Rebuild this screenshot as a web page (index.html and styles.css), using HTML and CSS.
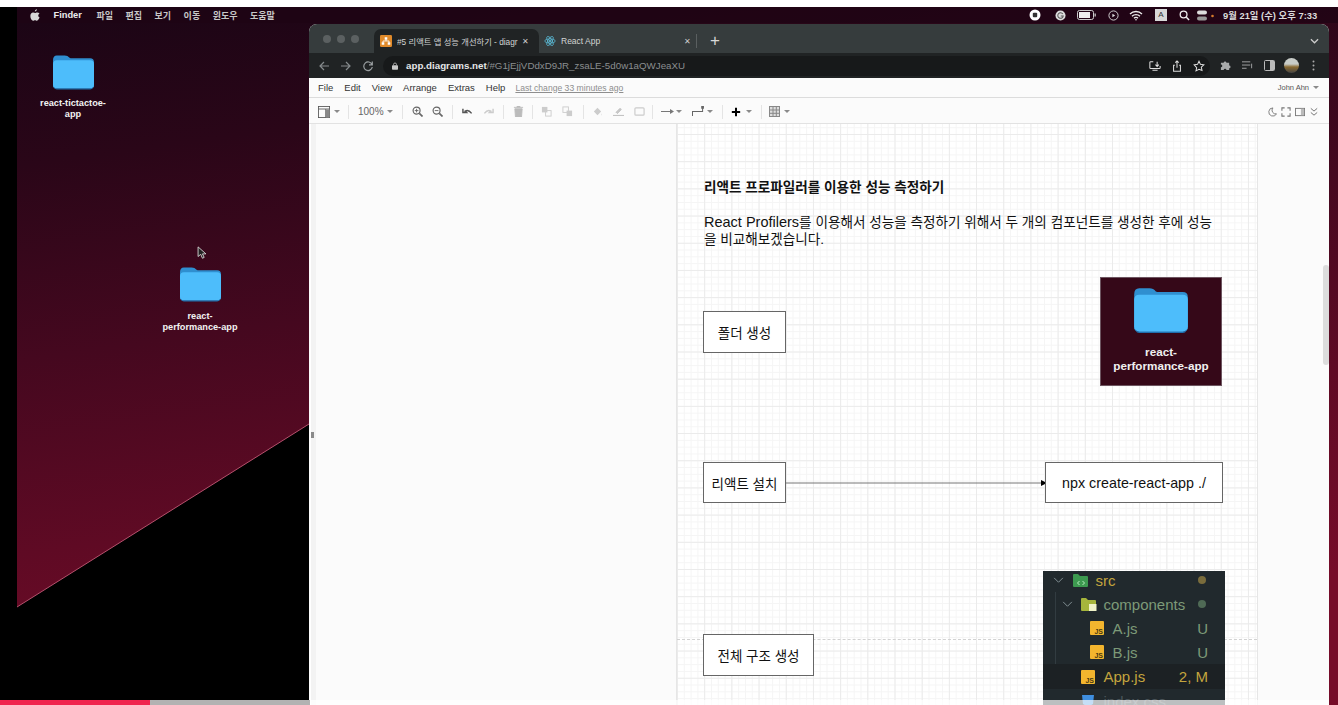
FILE: index.html
```html
<!DOCTYPE html>
<html lang="ko">
<head>
<meta charset="utf-8">
<title>Screen recording</title>
<link rel="stylesheet" href="styles.css">
</head>
<body>
<svg class="defs" width="0" height="0">
  <defs>
    <symbol id="folder" viewBox="0 0 42 36">
      <path d="M0 6q0-5 4-5h8q3 0 5 2.500l1 .5h20q4 0 4 4v23q0 4-4 4H4q-4 0-4-4z" fill="#2f8fd0"/>
      <path d="M0 10q0-4 4-4h34q4 0 4 4v21q0 4-4 4H4q-4 0-4-4z" fill="#4dbdfb"/>
      <path d="M1 33q1 2 3 2h34q2 0 3-2v1q-1 2-3 2H4q-2 0-3-2z" fill="#1f6fae"/>
    </symbol>
    <symbol id="jsfile" viewBox="0 0 14 14">
      <rect width="14" height="14" rx="1" fill="#f3b52e"/>
      <text x="13" y="12.500" text-anchor="end" class="js-mark">JS</text>
    </symbol>
  </defs>
</svg>
<div class="top-strip"></div>
<main class="screen">
  <div class="left-pillar"></div>
  <section class="desktop">
    <svg class="wall-wedge" viewBox="0 0 1321 698" width="1321" height="698">
      <polygon points="0,600 292,417 292,698 0,698" fill="#000"/>
      <line x1="0" y1="600" x2="292" y2="417" stroke="#b5506c" stroke-width="1"/>
    </svg>

    <header class="menubar">
      <div class="menu-left">
        <svg class="apple" viewBox="0 0 12 14"><path d="M8.300 0c.1 1.200-1 2.700-2.500 2.700C5.700 1.400 6.900.1 8.300 0zM11.500 10c-.7 1.700-1.800 3.800-3.200 3.800-.9 0-1.200-.6-2.300-.6s-1.400.6-2.300.6C2 13.800.4 10.800.4 8.200c0-2.500 1.500-4.200 3.300-4.200 1 0 1.700.6 2.400.6.700 0 1.400-.7 2.600-.7 1 0 2 .5 2.700 1.400-2.200 1.300-1.900 4 .1 4.700z"/></svg>
        <b class="menu-app">Finder</b>
        <span>파일</span><span>편집</span><span>보기</span><span>이동</span><span>윈도우</span><span>도움말</span>
      </div>
      <div class="menu-right">
        <svg class="st st-rec" viewBox="0 0 12 12"><circle cx="6" cy="6" r="5.500" fill="#fff"/><rect x="3.800" y="3.800" width="4.400" height="4.400" rx="1" fill="#333"/></svg>
        <svg class="st st-g" viewBox="0 0 12 12"><circle cx="6" cy="6" r="5.500" fill="#ddd"/><path d="M8.500 4.300A3 3 0 1 0 9 6.500H6.300" fill="none" stroke="#555" stroke-width="1.100"/></svg>
        <svg class="st st-bat" viewBox="0 0 19 10"><rect x=".5" y=".5" width="16" height="9" rx="2" fill="none" stroke="#ccc"/><rect x="2" y="2" width="11" height="6" fill="#eee"/><rect x="17.500" y="3.500" width="1.300" height="3" fill="#ccc"/></svg>
        <svg class="st st-play" viewBox="0 0 12 12"><circle cx="6" cy="6" r="5" fill="none" stroke="#ddd"/><path d="M4.800 4l3 2-3 2z" fill="#ddd"/></svg>
        <svg class="st st-wifi" viewBox="0 0 14 10"><path d="M1 3.500a8.500 8.500 0 0 1 12 0M3 5.700a5.700 5.700 0 0 1 8 0M5 7.800a2.800 2.800 0 0 1 4 0" fill="none" stroke="#eee" stroke-width="1.300"/><circle cx="7" cy="9.200" r=".8" fill="#eee"/></svg>
        <span class="st-a">A</span>
        <svg class="st st-search" viewBox="0 0 12 12"><circle cx="5" cy="5" r="3.700" fill="none" stroke="#eee" stroke-width="1.400"/><path d="M8 8l3 3" stroke="#eee" stroke-width="1.600"/></svg>
        <svg class="st st-ctl" viewBox="0 0 18 11"><rect x="0" y=".5" width="10" height="4" rx="2" fill="#ddd"/><rect x="0" y="6.500" width="10" height="4" rx="2" fill="#999"/><circle cx="15.500" cy="6" r="1.300" fill="#d77a2c"/></svg>
        <span class="clock">9월 21일 (수) 오후 7:33</span>
      </div>
    </header>

    <figure class="desk-icon desk-icon-one">
      <svg class="desk-folder"><use href="#folder"/></svg>
      <figcaption>react-tictactoe-<br>app</figcaption>
    </figure>
    <figure class="desk-icon desk-icon-two">
      <svg class="desk-folder"><use href="#folder"/></svg>
      <figcaption>react-<br>performance-app</figcaption>
    </figure>
    <svg class="cursor" viewBox="0 0 11 16"><path d="M1 1v11l3-2.500 2 4.500 2-1-2-4h4z" fill="#222" stroke="#ddd" stroke-width="1"/></svg>

    <div class="browser">
      <div class="tabstrip">
        <div class="traffic"><i></i><i></i><i></i></div>
        <div class="tab tab-active">
          <svg class="favicon" viewBox="0 0 14 14"><rect width="14" height="14" rx="1.500" fill="#e08a2a"/><path d="M5.500 2.500h3v3h-3zM2 8.500h3v3H2zM9 8.500h3v3H9z" fill="#fff"/><path d="M7 5.500v1.500M3.500 8.500V7h7v1.500" fill="none" stroke="#fff"/></svg>
          <span class="tab-title">#5 리액트 앱 성능 개선하기 - diagr</span>
          <span class="tab-x">✕</span>
        </div>
        <div class="tab tab-idle">
          <svg class="favicon" viewBox="0 0 14 14"><g fill="none" stroke="#5fc8e6" stroke-width=".8"><ellipse cx="7" cy="7" rx="6" ry="2.400"/><ellipse cx="7" cy="7" rx="6" ry="2.400" transform="rotate(60 7 7)"/><ellipse cx="7" cy="7" rx="6" ry="2.400" transform="rotate(120 7 7)"/></g><circle cx="7" cy="7" r="1.200" fill="#5fc8e6"/></svg>
          <span class="tab-title">React App</span>
          <span class="tab-x">✕</span>
        </div>
        <span class="tab-sep"></span>
        <span class="tab-plus">+</span>
        <svg class="tab-chev" viewBox="0 0 10 6"><path d="M1 1l4 4 4-4" fill="none" stroke="#ccc" stroke-width="1.400"/></svg>
      </div>

      <div class="addressbar">
        <svg class="nav" viewBox="0 0 12 12"><path d="M11 6H2M6 2L2 6l4 4" fill="none" stroke="#858a8c" stroke-width="1.200"/></svg>
        <svg class="nav" viewBox="0 0 12 12"><path d="M1 6h9M6 2l4 4-4 4" fill="none" stroke="#858a8c" stroke-width="1.200"/></svg>
        <svg class="nav" viewBox="0 0 12 12"><path d="M10 4.500A4.300 4.300 0 1 0 10.300 7M10.300 1.500v3.300H7" fill="none" stroke="#9a9fa1" stroke-width="1.200"/></svg>
        <div class="omnibox">
          <svg class="lock" viewBox="0 0 8 10"><rect y="4" width="8" height="6" rx="1" fill="#c8c8c8"/><path d="M2 4V3a2 2 0 0 1 4 0v1" fill="none" stroke="#c8c8c8"/></svg>
          <span class="url"><b>app.diagrams.net</b>/#G1jEjjVDdxD9JR_zsaLE-5d0w1aQWJeaXU</span>
          <span class="omni-icons">
            <svg viewBox="0 0 14 12"><path d="M5 1H2q-1 0-1 1v6q0 1 1 1h10q1 0 1-1V6M9.500 1v5M7.500 4.500l2 2 2-2M4 11h6" fill="none" stroke="#ddd" stroke-width="1.200"/></svg>
            <svg viewBox="0 0 12 14"><path d="M3.500 6H2v7h8V6H8.500M6 9V1M4 3l2-2 2 2" fill="none" stroke="#ddd" stroke-width="1.200"/></svg>
            <svg viewBox="0 0 14 14"><path d="M7 1.500l1.700 3.600 3.900.5-2.900 2.700.8 3.900L7 10.800l-3.500 1.900.8-3.900L1.400 5.600l3.900-.5z" fill="none" stroke="#ddd" stroke-width="1.200"/></svg>
          </span>
        </div>
        <div class="ext-icons">
          <svg viewBox="0 0 12 12"><path d="M1 3h3a1.500 1.500 0 0 1 3 0h3v3a1.500 1.500 0 0 1 0 3v2H7a1.500 1.500 0 0 0-3 0H1V8a1.500 1.500 0 0 0 0-3z" fill="#a8aaab"/></svg>
          <svg viewBox="0 0 12 10"><path d="M0 1h9M0 4.500h9M0 8h5M10.500 3v5" fill="none" stroke="#a8aaab" stroke-width="1"/></svg>
          <svg viewBox="0 0 11 11"><rect x=".5" y=".5" width="10" height="10" rx="1" fill="none" stroke="#bbb"/><rect x="6" y="1" width="4" height="9" fill="#bbb"/></svg>
          <span class="avatar"></span>
          <svg class="kebab" viewBox="0 0 3 11"><circle cx="1.500" cy="1.500" r="1" fill="#aaa"/><circle cx="1.500" cy="5.500" r="1" fill="#aaa"/><circle cx="1.500" cy="9.500" r="1" fill="#aaa"/></svg>
        </div>
      </div>

      <div class="app-menu">
        <nav class="app-menu-items"><span>File</span><span>Edit</span><span>View</span><span>Arrange</span><span>Extras</span><span>Help</span></nav>
        <span class="last-change">Last change 33 minutes ago</span>
        <span class="account">John Ahn <i class="caret"></i></span>
      </div>

      <div class="app-tools">
        <svg class="ti ti-panel" viewBox="0 0 14 14"><rect x=".5" y=".5" width="13" height="13" fill="none" stroke="#555"/><path d="M.5 3.500h13M9 3.500v10" stroke="#555" fill="none"/><rect x="9" y="4" width="4.500" height="9.500" fill="#888"/></svg><i class="caret"></i>
        <span class="tsep sep-a"></span>
        <span class="zoom">100%</span><i class="caret caret-zoom"></i>
        <span class="tsep sep-b"></span>
        <svg class="ti" viewBox="0 0 12 12"><circle cx="5" cy="5" r="3.800" fill="none" stroke="#666" stroke-width="1.300"/><path d="M8 8l3.500 3.500" stroke="#666" stroke-width="1.800"/><path d="M3 5h4M5 3v4" stroke="#666"/></svg>
        <svg class="ti ti-gap-9" viewBox="0 0 12 12"><circle cx="5" cy="5" r="3.800" fill="none" stroke="#666" stroke-width="1.300"/><path d="M8 8l3.500 3.500" stroke="#666" stroke-width="1.800"/><path d="M3 5h4" stroke="#666"/></svg>
        <span class="tsep sep-c"></span>
        <svg class="ti" viewBox="0 0 12 8"><path d="M1 1v4h4L3.500 3.500Q7 1.500 10.500 6" fill="none" stroke="#555" stroke-width="1.600"/></svg>
        <svg class="ti ti-gap" viewBox="0 0 12 8"><path d="M11 1v4H7l1.500-1.500Q5 1.500 1.500 6" fill="none" stroke="#ccc" stroke-width="1.600"/></svg>
        <span class="tsep sep-d"></span>
        <svg class="ti" viewBox="0 0 10 12"><path d="M1 3h8l-.7 9H1.700zM0 1.500h10M3.500 1.500V0h3v1.500" fill="#bbb" stroke="#bbb"/></svg>
        <span class="tsep sep-e"></span>
        <svg class="ti" viewBox="0 0 12 12"><rect x="1" y="1" width="6" height="6" fill="#ccc"/><rect x="5" y="5" width="6" height="6" fill="none" stroke="#ccc"/></svg>
        <svg class="ti ti-gap" viewBox="0 0 12 12"><rect x="1" y="1" width="6" height="6" fill="none" stroke="#ccc"/><rect x="5" y="5" width="6" height="6" fill="#ccc"/></svg>
        <span class="tsep sep-f"></span>
        <svg class="ti" viewBox="0 0 12 12"><path d="M2 6l4-4 4 4-4 4zM10.500 8q1 1.500 0 2.500" fill="#ccc"/></svg>
        <svg class="ti ti-gap" viewBox="0 0 14 12"><path d="M4 7L9 2l1.500 1.500-5 5zM0 11h14" stroke="#bbb" stroke-width="1.200" fill="#ccc"/></svg>
        <svg class="ti ti-gap" viewBox="0 0 12 12"><rect x="1" y="2" width="10" height="8" rx="1" fill="none" stroke="#ccc" stroke-width="1.300"/></svg>
        <span class="tsep sep-g"></span>
        <svg class="ti ti-wide" viewBox="0 0 14 8"><path d="M0 4h10" stroke="#777"/><path d="M9 1.500l4 2.500-4 2.500z" fill="#777"/></svg><i class="caret caret-arrow"></i>
        <svg class="ti ti-wide ti-gap-9" viewBox="0 0 14 12"><path d="M1 11V6h11V2" fill="none" stroke="#666" stroke-width="1.100"/><rect x="10.500" y="0" width="3" height="3" fill="#666"/></svg><i class="caret caret-way"></i>
        <span class="tsep sep-h"></span>
        <svg class="ti ti-plus" viewBox="0 0 12 12"><path d="M6 1v10M1 6h10" stroke="#000" stroke-width="2.400"/></svg><i class="caret caret-plus"></i>
        <span class="tsep sep-i"></span>
        <svg class="ti" viewBox="0 0 11 11"><rect x=".5" y=".5" width="10" height="10" fill="#ddd" stroke="#888"/><path d="M4 .5v10M7.300.5v10M.5 4h10M.5 7.300h10" stroke="#888"/></svg><i class="caret caret-table"></i>
        <span class="right-tools">
          <svg viewBox="0 0 11 11"><path d="M6.500 1a4.500 4.500 0 1 0 4 6.500A4 4 0 0 1 6.500 1z" fill="none" stroke="#777"/></svg>
          <svg viewBox="0 0 11 11"><path d="M1 4V1h3M7 1h3v3M10 7v3H7M4 10H1V7" fill="none" stroke="#777" stroke-width="1.200"/></svg>
          <svg viewBox="0 0 11 11"><rect x=".5" y="1.500" width="10" height="8" fill="none" stroke="#777"/><rect x="6.500" y="2" width="3.500" height="7" fill="#bbb"/></svg>
          <svg viewBox="0 0 11 11"><path d="M2 1.500l3.500 3 3.500-3M2 6l3.500 3 3.500-3" fill="none" stroke="#777" stroke-width="1.100"/></svg>
        </span>
      </div>

      <div class="workspace">
        <span class="pane-rail"></span>
        <span class="pane-grip"></span>
        <div class="page">
          <h2 class="d-title">리액트 프로파일러를 이용한 성능 측정하기</h2>
          <p class="d-intro"><span class="latin">React Profilers</span>를 이용해서 성능을 측정하기 위해서 두 개의 컴포넌트를 생성한 후에 성능<br>을 비교해보겠습니다.</p>
          <div class="node n-folder">폴더 생성</div>
          <figure class="thumb">
            <svg class="thumb-folder"><use href="#folder"/></svg>
            <figcaption>react-<br>performance-app</figcaption>
          </figure>
          <div class="node n-install">리액트 설치</div>
          <svg class="edge" viewBox="0 0 262 8"><path d="M0 4h256" stroke="#777" stroke-width="1"/><path d="M255 1l6 3-6 3z" fill="#000"/></svg>
          <div class="node n-npx">npx create-react-app ./</div>
          <div class="page-break"></div>
          <div class="node n-tree">전체 구조 생성</div>
          <div class="explorer">
            <span class="guide"></span>
            <div class="row row-src"><svg class="tw" viewBox="0 0 12 8"><path d="M1 1l5 5 5-5" fill="none" stroke="#8f9ba0" stroke-width="1"/></svg><svg class="ico-folder" viewBox="0 0 16 13"><path d="M0 1q0-1 1-1h4l2 2h7q1 0 1 1v9q0 1-1 1H1q-1 0-1-1z" fill="#3d9a50"/><path d="M6.500 7l-2 2 2 2M9.500 7l2 2-2 2" fill="none" stroke="#b8ecc0" stroke-width="1"/></svg><span class="n-git">src</span><i class="dot dot-y"></i></div>
            <div class="row row-comp"><svg class="tw" viewBox="0 0 12 8"><path d="M1 1l5 5 5-5" fill="none" stroke="#8f9ba0" stroke-width="1"/></svg><svg class="ico-folder" viewBox="0 0 16 13"><path d="M0 1q0-1 1-1h4l2 2h7q1 0 1 1v9q0 1-1 1H1q-1 0-1-1z" fill="#a6b53c"/><rect x="8" y="6" width="7.500" height="7" fill="#f0f3c8"/></svg><span class="n-new">components</span><i class="dot dot-g"></i></div>
            <div class="row row-file"><svg class="ico-js"><use href="#jsfile"/></svg><span class="n-new">A.js</span><em class="n-new">U</em></div>
            <div class="row row-file"><svg class="ico-js"><use href="#jsfile"/></svg><span class="n-new">B.js</span><em class="n-new">U</em></div>
            <div class="row row-app"><svg class="ico-js"><use href="#jsfile"/></svg><span class="n-git">App.js</span><em class="n-git">2, M</em></div>
            <div class="row row-css"><svg class="ico-css" viewBox="0 0 14 14"><path d="M1 1h12l-1 9-5 3-5-3z" fill="#3f8fe0"/></svg><span class="n-dim">index.css</span></div>
          </div>
        </div>
        <div class="scroll-gutter"><span class="scroll-thumb"></span></div>
      </div>
    </div>
  </section>
</main>
<div class="progress"><span class="progress-played"></span><span class="progress-buffer"></span></div>
</body>
</html>
```
FILE: styles.css
```css
* { box-sizing: border-box; }
html, body { margin: 0; padding: 0; width: 1338px; height: 705px; overflow: hidden; background: #fff; }
body { position: relative; font-family: "Liberation Sans", "Noto Sans CJK KR", sans-serif; }
.defs { position: absolute; }
.js-mark { font: 700 7px "Liberation Sans", sans-serif; fill: #4a3a10; }
.top-strip { height: 7px; background: #fff; }
.screen { display: flex; height: 698px; background: #000; }
.left-pillar { width: 17px; background: #000; }
.desktop {
  position: relative; width: 1321px; overflow: hidden;
  background: linear-gradient(172deg, #1a0515 0%, #2a0618 18%, #45081f 40%, #5f0a24 62%, #760c29 85%);
}
.wall-wedge { position: absolute; left: 0; top: 0; }
.menubar {
  position: relative; display: flex; justify-content: space-between; align-items: center;
  height: 16px; padding: 0 0 0 13px; background: rgba(30, 4, 20, .7); color: #dcdcdc;
  font-size: 9px; font-weight: 500;
}
.menu-left { display: flex; align-items: center; gap: 12.500px; }
.menu-left span { font-weight: 700; color: #c8c8c8; }
.menu-app { color: #ececec; font-size: 9.300px; margin-right: 2px; }
.apple { width: 10px; height: 12px; fill: #d8d8d8; margin-right: 1px; }
.menu-right { display: flex; align-items: center; width: 305px; flex: none; margin-right: 5px; position: relative; }
.st { flex: none; height: 11px; width: 11px; }
.st-rec { margin-left: 1px; height: 12px; width: 12px; }
.st-g { margin-left: 13.500px; }
.st-bat { margin-left: 11px; width: 19px; height: 10px; }
.st-play { margin-left: 12px; }
.st-wifi { margin-left: 10.500px; width: 14px; }
.st-a { margin-left: 12px; width: 12px; height: 12px; background: #d8d8d8; color: #333; font-size: 8px; text-align: center; line-height: 12px; }
.st-search { margin-left: 11.500px; }
.st-ctl { margin-left: 7.500px; width: 18px; }
.clock { margin-left: 8px; font-size: 9.400px; font-weight: 700; color: #dcdcdc; white-space: nowrap; }

.desk-icon { position: absolute; margin: 0; width: 90px; text-align: center; color: #f2f2f2; font-size: 9.200px; font-weight: 700; line-height: 11px; }
.desk-folder { display: block; width: 41px; height: 36px; margin: 0 auto; }
.desk-icon-one { left: 11px; top: 47px; }
.desk-icon-one figcaption { margin-top: 8px; }
.desk-icon-two { left: 138px; top: 259px; }
.desk-icon-two figcaption { margin-top: 9px; line-height: 10.500px; }
.cursor { position: absolute; left: 180px; top: 239px; width: 10px; height: 14px; }

.browser {
  position: absolute; left: 292px; top: 17px; width: 1020px; height: 681px;
  display: flex; flex-direction: column; border-radius: 8px 8px 0 0; overflow: hidden; background: #fff;
}
.tabstrip { position: relative; display: flex; align-items: flex-end; height: 29px; flex: none; background: #363c3d; color: #d2d4d4; font-size: 8.300px; }
.traffic { display: flex; gap: 6px; width: 65px; padding: 0 0 0 14px; align-self: center; flex: none; }
.traffic i { width: 8px; height: 8px; border-radius: 50%; background: #5b6061; }
.tab { display: flex; align-items: center; height: 24px; padding: 0 6px; flex: none; }
.tab-active { width: 165px; padding-right: 10px; background: #202324; border-radius: 7px 7px 0 0; }
.tab-idle { width: 158px; padding-left: 5px; font-size: 8.500px; }
.favicon { width: 12px; height: 12px; margin-right: 5px; flex: none; }
.tab-title { flex: 1; white-space: nowrap; overflow: hidden; }
.tab-x { font-size: 8px; color: #ccc; flex: none; margin-left: 4px; }
.tab-sep { width: 1px; height: 14px; background: #5a5f60; margin: 0 0 5px -1px; }
.tab-plus { font-size: 17px; line-height: 24px; margin-left: 13px; color: #d8d8d8; }
.tab-chev { position: absolute; right: 10px; top: 14px; width: 9px; height: 6px; }

.addressbar { display: flex; align-items: center; height: 25px; flex: none; background: #202324; padding-left: 9px; }
.nav { width: 12px; height: 12px; margin-right: 10px; flex: none; }
.omnibox { display: flex; align-items: center; width: 827px; height: 20px; margin-left: -1px; background: #17191a; border-radius: 10px; padding: 0 5px 0 9px; }
.lock { width: 6px; height: 8px; margin-right: 8px; flex: none; }
.url { color: #8a8e90; font-size: 9.750px; white-space: nowrap; }
.url b { color: #e4e6e7; font-weight: 700; }
.omni-icons { display: flex; align-items: center; gap: 10px; margin-left: auto; }
.omni-icons svg { width: 12px; height: 12px; }
.ext-icons { display: flex; align-items: center; gap: 11px; margin-left: 10px; }
.ext-icons svg { width: 11px; height: 11px; }
.ext-icons .kebab { width: 3px; margin-left: 2px; }
.avatar { width: 15px; height: 15px; margin-left: -2px; border-radius: 50%; background: linear-gradient(#c8ccc8 40%, #8a6a30 60%, #444); }

.app-menu { display: flex; align-items: center; height: 20px; flex: none; background: #fbfbfb; border-bottom: 1px solid #dcdcdc; padding: 0 10px 0 9px; font-size: 9.500px; color: #333; }
.app-menu-items { display: flex; gap: 11px; }
.last-change { margin-left: 10px; font-size: 8.600px; color: #8e8e8e; text-decoration: underline; }
.account { margin-left: auto; font-size: 7.500px; color: #555; display: flex; align-items: center; gap: 4px; }
.caret { width: 0; height: 0; border: 3px solid transparent; border-top: 3.500px solid #8a8a8a; border-bottom: 0; display: inline-block; flex: none; margin-left: 4px; }
.account .caret { margin-left: 0; }

.app-tools { display: flex; align-items: center; height: 26px; flex: none; background: #fbfbfb; border-bottom: 1px solid #e2e2e2; padding: 2px 0 0 9px; color: #555; font-size: 10px; }
.ti { width: 11px; height: 11px; flex: none; }
.ti-panel { width: 12px; height: 12px; }
.ti-gap { margin-left: 10px; }
.ti-gap-9 { margin-left: 9px; }
.ti-wide { width: 14px; }
.ti-plus { width: 10px; height: 10px; }
.tsep { width: 1px; height: 14px; background: #e4e4e4; flex: none; }
.sep-a { margin: 0 9px 0 8px; }
.sep-b { margin: 0 9px 0 9.500px; }
.sep-c { margin: 0 9px 0 8.500px; }
.sep-d { margin: 0 8.500px 0 9.500px; }
.sep-e { margin: 0 8px 0 8.500px; }
.sep-f { margin: 0 8px 0 9.500px; }
.sep-g { margin: 0 8px 0 7.500px; }
.sep-h { margin: 0 8px 0 9px; }
.sep-i { margin: 0 6.500px 0 9px; }
.zoom { color: #666; font-size: 10px; }
.caret-zoom { margin-left: 3px; }
.caret-arrow { margin-left: 1px; }
.caret-way { margin-left: 2px; }
.caret-plus { margin-left: 5px; }
.caret-table { margin-left: 4.500px; }
.right-tools { display: flex; gap: 4px; margin-left: auto; margin-right: 10px; }
.right-tools svg { width: 10px; height: 10px; }

.workspace { position: relative; flex: 1; min-height: 0; display: flex; background: #fbfbfb; }
.pane-rail { position: absolute; left: 1px; top: 0; bottom: 0; width: 6px; background: #f3f3f3; border-left: 1px solid #fff; }
.pane-grip { position: absolute; left: 2px; top: 308px; width: 3px; height: 6px; background: #8a8a8a; }
.page {
  position: relative; margin-left: 367px; width: 582px; height: 100%; flex: none;
  border-left: 1px solid #e6e6e6; border-right: 1px solid #e6e6e6;
  background-color: #fff;
  background-image:
    linear-gradient(#ebebeb 1px, transparent 1px),
    linear-gradient(90deg, #ebebeb 1px, transparent 1px),
    linear-gradient(#f5f5f5 1px, transparent 1px),
    linear-gradient(90deg, #f5f5f5 1px, transparent 1px);
  background-size: 27.200px 27.200px, 27.200px 27.200px, 6.800px 6.800px, 6.800px 6.800px;
  background-position: 0 10px;
}
.d-title { position: absolute; left: 27px; top: 56px; margin: 0; font-size: 13.600px; font-weight: 700; line-height: 16px; color: #111; white-space: nowrap; }
.d-intro { position: absolute; left: 27px; top: 90px; margin: 0; font-size: 13.600px; line-height: 17px; color: #111; white-space: nowrap; }
.latin { font-size: 14.500px; }
.node { position: absolute; display: flex; align-items: center; justify-content: center; background: #fff; border: 1px solid #666; font-size: 13.500px; color: #111; }
.n-folder { left: 26px; top: 187px; width: 83px; height: 42px; }
.n-install { left: 26px; top: 338px; width: 83px; height: 41px; }
.n-npx { left: 368px; top: 338px; width: 178px; height: 41px; font-size: 14.300px; }
.n-tree { left: 26px; top: 510px; width: 111px; height: 42px; }
.edge { position: absolute; left: 109px; top: 355px; width: 262px; height: 8px; }
.page-break { position: absolute; left: 0; right: 0; top: 515px; border-top: 1px dashed #d2d2d2; }
.thumb { position: absolute; left: 423px; top: 153px; width: 122px; height: 109px; margin: 0; background: #350818; border: 1px solid #6d5560; color: #f0f0f0; text-align: center; font-size: 11.700px; font-weight: 700; line-height: 14.500px; }
.thumb figcaption { margin-top: 11.500px; }
.thumb-folder { display: block; width: 54px; height: 46px; margin: 9px auto 0; }
.explorer { position: absolute; left: 366px; top: 447px; width: 182px; height: 140px; overflow: hidden; background: #21292d; color: #999; font-size: 15px; }
.guide { position: absolute; left: 12px; top: 21px; bottom: 40px; width: 1px; background: #323c41; }
.row { position: relative; display: flex; align-items: center; height: 24px; }
.row-src { height: 21px; padding: 0 0 3px 9.500px; }
.row-comp { padding-left: 18.500px; }
.row-file { padding-left: 47px; }
.row-app { height: 25px; padding-left: 38px; background: #1c2124; }
.row-css { padding-left: 38px; }
.row-src .tw { margin-right: 9px; }
.row-comp .tw { margin-right: 8px; }
.tw { width: 11px; height: 7px; flex: none; }
.ico-folder { width: 16px; height: 13px; flex: none; margin-right: 7px; }
.ico-js { width: 14px; height: 14px; flex: none; margin-right: 8.500px; }
.ico-css { width: 14px; height: 14px; flex: none; margin-right: 8.500px; }
.row em { position: absolute; right: 17px; font-style: normal; }
.n-git { color: #c4a53e; }
.n-new { color: #7d9a78; }
.n-dim { color: #4b555a; }
.dot { position: absolute; right: 19px; width: 8px; height: 8px; border-radius: 50%; }
.dot-y { background: #7a6c3c; }
.dot-g { background: #4f6a55; }
.scroll-gutter { position: relative; flex: 1; }
.scroll-thumb { position: absolute; right: 0; top: 141px; width: 6px; height: 100px; background: #dcdcdc; border-radius: 3px; }

.progress { position: absolute; left: 0; right: 9px; bottom: 0; height: 5px; display: flex; background: rgba(255,255,255,.7); }
.progress-played { width: 150px; background: #f0244e; }
.progress-buffer { width: 159px; background: #b2b2b2; margin-left: 1px; }
```
